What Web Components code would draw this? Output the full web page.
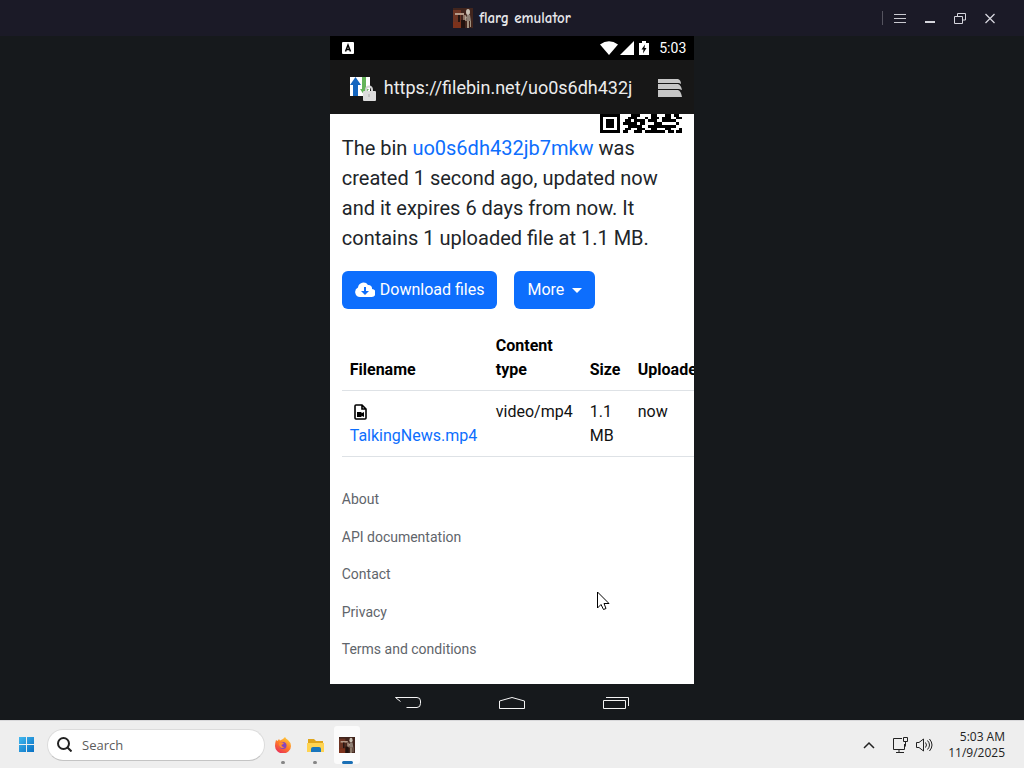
<!DOCTYPE html>
<html lang="en">
<head>
<meta charset="utf-8">
<meta name="viewport" content="width=device-width, initial-scale=1">
<title>flarg emulator</title>
<style>
  body {
    margin: 0;
    height: 100vh;
    display: flex;
    flex-direction: column;
    overflow: hidden;
    background: #16191c;
    font-family: Roboto, "Liberation Sans", sans-serif;
  }
</style>
</head>
<body>
  <title-bar>flarg emulator</title-bar>
  <phone-stage>
    <status-bar time="5:03"></status-bar>
    <url-bar url="https://filebin.net/uo0s6dh432j"></url-bar>
    <bin-page>
      <bin-summary></bin-summary>
      <bin-actions></bin-actions>
      <file-table></file-table>
      <footer-links>
        <a href="#about">About</a>
        <a href="#api">API documentation</a>
        <a href="#contact">Contact</a>
        <a href="#privacy">Privacy</a>
        <a href="#terms">Terms and conditions</a>
      </footer-links>
    </bin-page>
  </phone-stage>
  <task-bar></task-bar>
  <mouse-pointer></mouse-pointer>

<script>
const base = `
  * { box-sizing: border-box; }
  svg { display: block; flex: none; }
  button { font: inherit; color: inherit; background: none; border: 0; padding: 0; margin: 0; }
  a { text-decoration: none; }
`;

// the emulator's own picture, used in the title bar and in the taskbar
const appIcon = (size) => `
  <svg width="${size}" height="${size}" viewBox="0 0 20 20" aria-hidden="true">
    <rect width="20" height="20" fill="#42251d"/>
    <path d="M0 2h8v12H0z" fill="#6d3524"/>
    <path d="M2 5h9v2H2z" fill="#b59a88"/>
    <path d="M5 7h2v8H5z" fill="#251512"/>
    <path d="M10 7h3v6h-3z" fill="#8e7364"/>
    <path d="M0 14h8v6H0z" fill="#7c321c"/>
    <path d="M8 12h4v8H8z" fill="#21120f"/>
    <ellipse cx="15" cy="4" rx="2" ry="3" fill="#c9c0b4"/>
    <path d="M14 7h3l1 6h-5z" fill="#8f8176"/>
    <path d="M14 13h2v7h-2zM17 13h1v6h-1z" fill="#a1917f"/>
    <path d="M12 8l2 1-2 4z" fill="#b6a797"/>
  </svg>`;

class TitleBar extends HTMLElement {
  constructor() {
    super();
    this.attachShadow({mode: 'open'});
  }

  connectedCallback() {
    this.shadowRoot.innerHTML = `
      <style>
        ${base}
        :host {
          display: grid;
          grid-template-columns: 1fr auto 1fr;
          align-items: center;
          height: 36px;
          flex: none;
          background: #1b1a27;
          color: #e6e6ea;
        }
        .name {
          grid-column: 2;
          display: flex;
          align-items: center;
          gap: 6px;
          font: 700 15px/20px "Comic Neue", "Comic Sans MS", Lato, sans-serif;
        }
        .controls {
          display: flex;
          justify-content: flex-end;
          align-items: center;
          padding-right: 19px;
        }
        .controls::before {
          content: "";
          width: 1px;
          height: 14px;
          margin-right: 2px;
          background: #55545f;
        }
        button {
          width: 30px;
          height: 36px;
          display: grid;
          place-items: center;
        }
      </style>
      <div class="name">${appIcon(20)}<span><slot></slot></span></div>
      <div class="controls">
        <button aria-label="Menu">
          <svg width="14" height="14" stroke="#c9c9d0" fill="none"><path d="M1 3.500h12M1 7.500h12M1 11.500h12"/></svg>
        </button>
        <button aria-label="Minimize">
          <svg width="14" height="14" fill="#d5d5dc"><path d="M2 10h10v2H2z"/></svg>
        </button>
        <button aria-label="Restore">
          <svg width="14" height="14" stroke="#d5d5dc" fill="none"><path d="M1.500 5.500h8v7h-8zM4.500 5V2.500h8v6.500H10"/></svg>
        </button>
        <button aria-label="Close">
          <svg width="14" height="14" stroke="#d5d5dc" fill="none" stroke-width="1.300"><path d="M2.500 3l9 9M11.500 3l-9 9"/></svg>
        </button>
      </div>
    `;
  }
}

class PhoneStage extends HTMLElement {
  constructor() {
    super();
    this.attachShadow({mode: 'open'});
  }

  connectedCallback() {
    this.shadowRoot.innerHTML = `
      <style>
        ${base}
        :host {
          display: flex;
          flex-direction: column;
          align-items: center;
          flex: 1;
          min-height: 0;
        }
        .screen {
          display: flex;
          flex-direction: column;
          flex: 1;
          min-height: 0;
          aspect-ratio: 9 / 16;
          overflow: hidden;
          background: #fff;
        }
        nav {
          display: flex;
          justify-content: center;
          align-items: center;
          gap: 76px;
          height: 36px;
          flex: none;
        }
        nav svg { fill: none; stroke: #f4f4f4; }
      </style>
      <div class="screen"><slot></slot></div>
      <nav>
        <button aria-label="Back">
          <svg width="28" height="14"><path d="M6.500 6.500L1.500 2.500H23q3.500 0 3.500 3.500v2.500q0 4-3.500 4H12.500"/></svg>
        </button>
        <button aria-label="Home">
          <svg width="28" height="14"><path d="M1.500 13.500V6L14 2.500 26.500 6v7.500z"/></svg>
        </button>
        <button aria-label="Recent apps">
          <svg width="28" height="14"><path d="M1.500 5.500h22v8h-22zM4 2.500h22.500v8.500"/></svg>
        </button>
      </nav>
    `;
  }
}

class StatusBar extends HTMLElement {
  constructor() {
    super();
    this.attachShadow({mode: 'open'});
  }

  connectedCallback() {
    this.shadowRoot.innerHTML = `
      <style>
        ${base}
        :host {
          display: flex;
          align-items: center;
          height: 24px;
          flex: none;
          padding: 0 8px 0 12px;
          background: #000;
          color: #fff;
          font-size: 14px;
        }
        .right {
          display: flex;
          align-items: center;
          margin-left: auto;
        }
        .right span { margin-left: 8px; }
      </style>
      <svg width="12" height="12" viewBox="0 0 12 12">
        <rect width="12" height="12" rx="1" fill="#fff"/>
        <path d="M3.500 9.500L6 3l2.500 6.500M4.500 7.500h3" fill="none" stroke="#000" stroke-width="1.500"/>
      </svg>
      <div class="right">
        <svg width="20" height="16" fill="#fff"><path d="M1 4.500Q10-2 19 4.500L10 15z"/></svg>
        <svg width="18" height="16" fill="#fff"><path d="M15 1v14H1z"/></svg>
        <svg width="14" height="16"><path d="M2 3h3V1h4v2h3v12H2z" fill="#fff"/><path d="M8 4.500L4.500 9.500h2l-.500 4 3.500-5.500h-2z" fill="#000"/></svg>
        <span>${this.getAttribute('time')}</span>
      </div>
    `;
  }
}

class UrlBar extends HTMLElement {
  constructor() {
    super();
    this.attachShadow({mode: 'open'});
  }

  connectedCallback() {
    this.shadowRoot.innerHTML = `
      <style>
        ${base}
        :host {
          display: flex;
          align-items: center;
          height: 53px;
          flex: none;
          gap: 8px;
          padding: 1px 11px 0 19px;
          background: #171717;
          color: #ececec;
        }
        input {
          flex: 1;
          min-width: 0;
          height: 32px;
          padding: 0;
          border: 0;
          outline: 0;
          background: none;
          color: inherit;
          font: 18px/32px Roboto, sans-serif;
        }
      </style>
      <svg width="27" height="26" viewBox="0 0 27 26">
        <path d="M1 2h20v19H1z" fill="#fff"/>
        <path d="M4 21V10H1l5.500-8L12 10H9v11z" fill="#1566c0"/>
        <path d="M13 2h4v12h3l-5 6-4-6h2z" fill="#65b45a"/>
        <path d="M17 17v-2q0-3.500 3-3.500t3 3.500v2" fill="none" stroke="#d4d4d4" stroke-width="2"/>
        <rect x="14" y="16" width="13" height="10" rx="1" fill="#dcdcdc"/>
        <path d="M20 19v3" stroke="#aaa"/>
      </svg>
      <input type="text" aria-label="Address" value="${this.getAttribute('url')}">
      <button aria-label="Tabs">
        <svg width="26" height="22" fill="#c6c6c6">
          <path d="M1 2h20q3 1 3 5l-2-1H1z"/>
          <path d="M1 7h20q3 1 4 6l-3-1H1z"/>
          <path d="M1 13h20q3 1 4 7H1z"/>
        </svg>
      </button>
    `;
  }
}

class BinPage extends HTMLElement {
  constructor() {
    super();
    this.attachShadow({mode: 'open'});
  }

  connectedCallback() {
    this.shadowRoot.innerHTML = `
      <style>
        :host {
          display: flex;
          flex-direction: column;
          flex: 1;
          min-height: 0;
          padding: 0 12px;
          overflow: hidden;
          background: #fff;
          color: #212529;
          font-size: 16px;
          line-height: 24px;
        }
      </style>
      <slot></slot>
    `;
  }
}

class BinSummary extends HTMLElement {
  constructor() {
    super();
    this.attachShadow({mode: 'open'});
  }

  // last rows of the bin's QR code, the rest is scrolled out of view
  qrCode() {
    const rows = [
      '11111110000111000011000110110',
      '10000010001110001011101110011',
      '10111010011011110111001111100',
      '10111010111110110001110000010',
      '10111010001111100111111111100',
      '10000010011001110011000110001',
      '11111110110011101111111011011',
    ];
    let d = '';
    rows.forEach((row, y) => {
      [...row].forEach((bit, x) => {
        if (bit === '1') d += `M${x} ${y}h1v1h-1z`;
      });
    });
    return `<svg width="82" height="19" viewBox="0 0 29 7" preserveAspectRatio="none" shape-rendering="crispEdges"><path d="${d}"/></svg>`;
  }

  connectedCallback() {
    this.shadowRoot.innerHTML = `
      <style>
        ${base}
        :host {
          display: block;
          flex: none;
        }
        svg { margin-left: auto; }
        p {
          margin: 0 0 18px;
          font-size: 20px;
          line-height: 30px;
        }
        a { color: #0d6efd; }
      </style>
      ${this.qrCode()}
      <p>The bin <a href="#bin">uo0s6dh432jb7mkw</a> was created 1 second ago, updated now and it expires 6 days from now. It contains 1 uploaded file at 1.1 MB.</p>
    `;
  }
}

class BinActions extends HTMLElement {
  constructor() {
    super();
    this.attachShadow({mode: 'open'});
  }

  connectedCallback() {
    this.shadowRoot.innerHTML = `
      <style>
        ${base}
        :host {
          display: flex;
          flex: none;
          gap: 17px;
          margin-bottom: 17px;
        }
        button {
          display: flex;
          align-items: center;
          gap: 5px;
          height: 38px;
          padding: 0 13px;
          border-radius: 6px;
          background: #0d6efd;
          color: #fff;
        }
        .more { gap: 8px; }
        .more::after {
          content: "";
          border: 5px solid transparent;
          border-top-color: #fff;
          border-bottom: 0;
        }
      </style>
      <button>
        <svg width="20" height="16" viewBox="0 0 20 16">
          <path d="M5 15a5 5 0 0 1-2-9.500A5.500 5.500 0 0 1 13 3a3.500 3.500 0 0 1 4 4 4 4 0 0 1-1 8z" fill="#fff"/>
          <path d="M9 5h2v4h3l-4 4-4-4h3z" fill="#0d6efd"/>
        </svg>
        Download files
      </button>
      <button class="more" aria-haspopup="menu">More</button>
    `;
  }
}

class FileTable extends HTMLElement {
  constructor() {
    super();
    this.attachShadow({mode: 'open'});
  }

  connectedCallback() {
    this.shadowRoot.innerHTML = `
      <style>
        ${base}
        :host {
          display: block;
          flex: none;
          color: #111;
        }
        table {
          width: 384px;
          table-layout: fixed;
          border-collapse: collapse;
        }
        .filename { width: 146px; }
        .type { width: 94px; }
        .size { width: 48px; }
        th, td {
          padding: 8px;
          border-bottom: 1px solid #dee2e6;
          text-align: left;
        }
        th {
          vertical-align: bottom;
          font-weight: 700;
          color: #000;
        }
        td {
          padding-top: 9px;
          vertical-align: top;
        }
        td svg { margin: 4px; }
        a {
          display: block;
          color: #0d6efd;
        }
      </style>
      <table>
        <thead>
          <tr>
            <th class="filename">Filename</th>
            <th class="type">Content type</th>
            <th class="size">Size</th>
            <th>Uploaded</th>
          </tr>
        </thead>
        <tbody>
          <tr>
            <td>
              <svg width="13" height="16" viewBox="0 0 13 16">
                <path d="M2 1h6l4 4v9q0 1-1 1H2q-1 0-1-1V2q0-1 1-1zM8 1v4h4" fill="none" stroke="#000" stroke-width="1.600"/>
                <path d="M3 8h4.500v1.300L10 8v5L7.500 11.700V13H3z"/>
              </svg>
              <a href="#file">TalkingNews.mp4</a>
            </td>
            <td>video/mp4</td>
            <td>1.1 MB</td>
            <td>now</td>
          </tr>
        </tbody>
      </table>
    `;
  }
}

class FooterLinks extends HTMLElement {
  constructor() {
    super();
    this.attachShadow({mode: 'open'});
  }

  connectedCallback() {
    this.shadowRoot.innerHTML = `
      <style>
        :host {
          display: flex;
          flex-direction: column;
          justify-content: space-between;
          align-items: flex-start;
          flex: 1;
          padding: 32px 0 25px;
          font-size: 14px;
          line-height: 20px;
        }
        ::slotted(a) {
          color: #5f656b;
          text-decoration: none;
        }
      </style>
      <slot></slot>
    `;
  }
}

class TaskBar extends HTMLElement {
  constructor() {
    super();
    this.attachShadow({mode: 'open'});
  }

  connectedCallback() {
    this.shadowRoot.innerHTML = `
      <style>
        ${base}
        :host {
          display: flex;
          align-items: center;
          box-sizing: border-box;
          height: 48px;
          flex: none;
          padding: 0 19px 0 18px;
          background: #eeeeee;
          border-top: 1px solid #d8d8da;
          color: #222;
          font-family: "Open Sans", "Noto Sans", sans-serif;
        }
        label {
          display: flex;
          align-items: center;
          gap: 10px;
          width: 218px;
          height: 32px;
          margin: 0 5px 0 12px;
          padding: 0 9px;
          border: 1px solid #dcdcdc;
          border-bottom-color: #c4c4c4;
          border-radius: 16px;
          background: #fff;
        }
        input {
          flex: 1;
          min-width: 0;
          padding: 0;
          border: 0;
          outline: 0;
          background: none;
          font: 13px/20px "Open Sans", sans-serif;
        }
        input::placeholder { color: #5c5c5c; }
        .app {
          display: flex;
          flex-direction: column;
          align-items: center;
          justify-content: flex-end;
          gap: 8px;
          width: 26px;
          height: 38px;
          margin-right: 6px;
        }
        .app::after {
          content: "";
          width: 4px;
          height: 3px;
          border-radius: 2px;
          background: #858585;
        }
        .active {
          border-radius: 3px;
          background: #fbfbfb;
        }
        .active::after {
          width: 11px;
          background: #1a6fb5;
        }
        .tray {
          display: flex;
          align-items: center;
          gap: 6px;
          margin-left: auto;
        }
        .tray svg { fill: none; stroke: #222; }
        .chevron { margin-right: 10px; }
        time {
          margin-left: 9px;
          text-align: right;
          font-size: 12px;
          line-height: 16px;
        }
      </style>
      <button aria-label="Start">
        <svg width="17" height="17">
          <defs><linearGradient id="win" x2="1" y2="1"><stop stop-color="#42b8ee"/><stop offset="1" stop-color="#0870c4"/></linearGradient></defs>
          <path d="M1 1h7v7H1zM9 1h7v7H9zM1 9h7v7H1zM9 9h7v7H9z" fill="url(#win)"/>
        </svg>
      </button>
      <label>
        <svg width="15" height="15" fill="none" stroke="#222" stroke-width="2"><circle cx="6.500" cy="6.500" r="5.500"/><path d="M10.500 10.500l4 4"/></svg>
        <input type="text" placeholder="Search" aria-label="Search">
      </label>
      <button class="app" aria-label="Firefox">
        <svg width="16" height="16" viewBox="0 0 16 16">
          <defs><linearGradient id="fox" x1=".8" y1="0" x2=".2" y2="1"><stop stop-color="#ffd43b"/><stop offset=".5" stop-color="#ff7a28"/><stop offset="1" stop-color="#e8285c"/></linearGradient></defs>
          <path d="M1 3l1.500 1L4 2l1 1.500L8 2l2-2q1 2 3 3 3 2.500 3 6a8 7.500 0 0 1-16 0q0-3 1-6z" fill="url(#fox)"/>
          <circle cx="8" cy="8.500" r="3.500" fill="#8745bd"/>
          <path d="M4 6q3-1.500 5 .500L6.500 8q0 2 3 2-2.500 2-4.500 0T4 6z" fill="#ff8d2b"/>
        </svg>
      </button>
      <button class="app" aria-label="File Explorer">
        <svg width="17" height="16" viewBox="0 0 17 16">
          <path d="M1 2h6l2 2h7v11H1z" fill="#dfa51c"/>
          <path d="M0 6h17v9H0z" fill="#ffd452"/>
          <path d="M4 15v-3q0-2 2-2h6q2 0 2 2v3z" fill="#1976bd"/>
        </svg>
      </button>
      <button class="app active" aria-label="flarg emulator">${appIcon(16)}</button>
      <div class="tray">
        <button class="chevron" aria-label="Show hidden icons">
          <svg width="12" height="8" stroke-width="1.500"><path d="M1 7l5-5 5 5"/></svg>
        </button>
        <svg width="18" height="18"><path d="M11 2.500H2.500v11h11V8M5 16.500h8M8 14v2M12.500 1.500h4v4h-4zM14.500 6v3q0 1.500-1 2"/></svg>
        <svg width="18" height="16"><path d="M1.500 5.500h2.500L8.500 2v12L4 10.500H1.500zM10.500 5.500q2 2.500 0 5M12.500 3.500q4 4.500 0 9M14.500 2q5 6 0 12"/></svg>
        <time datetime="2025-11-09T05:03">5:03 AM<br>11/9/2025</time>
      </div>
    `;
  }
}

class MousePointer extends HTMLElement {
  constructor() {
    super();
    this.attachShadow({mode: 'open'});
  }

  connectedCallback() {
    this.shadowRoot.innerHTML = `
      <style>
        :host {
          position: absolute;
          left: 597px;
          top: 591px;
          pointer-events: none;
        }
        svg { display: block; }
      </style>
      <svg width="13" height="20"><path d="M.500 1v16l3.500-3.500 2.500 5 2.500-1-2-5h5z" fill="#fff" stroke="#000"/></svg>
    `;
  }
}

customElements.define('title-bar', TitleBar);
customElements.define('phone-stage', PhoneStage);
customElements.define('status-bar', StatusBar);
customElements.define('url-bar', UrlBar);
customElements.define('bin-page', BinPage);
customElements.define('bin-summary', BinSummary);
customElements.define('bin-actions', BinActions);
customElements.define('file-table', FileTable);
customElements.define('footer-links', FooterLinks);
customElements.define('task-bar', TaskBar);
customElements.define('mouse-pointer', MousePointer);
</script>
</body>
</html>
